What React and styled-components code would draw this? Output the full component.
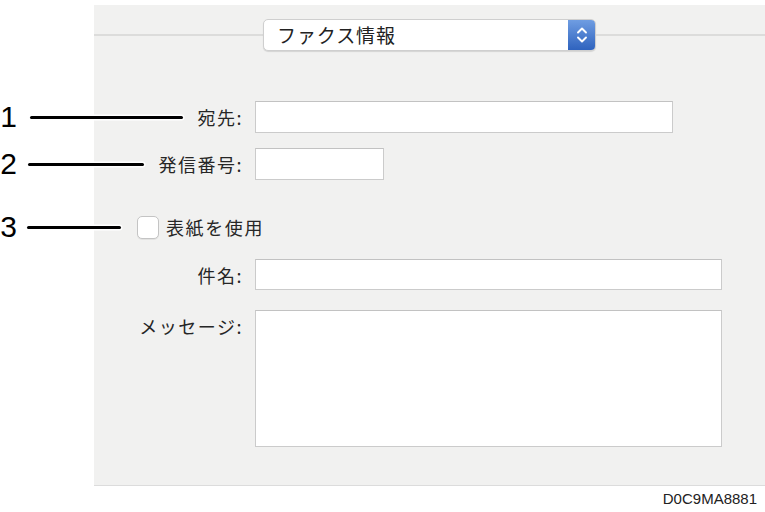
import React from "react";
import styled, { createGlobalStyle } from "styled-components";

const Global = createGlobalStyle`
  html, body { margin: 0; padding: 0; background: #ffffff; }
  body { font-family: "Noto Sans CJK JP", "Noto Sans", sans-serif; }
  * { box-sizing: border-box; }
`;

const Page = styled.div`
  position: relative;
  width: 765px;
  height: 512px;
  overflow: hidden;
  background: #fff;
  display: flex;
  flex-direction: column;
  padding-top: 5px;
`;

const Panel = styled.div`
  margin-left: 94px;
  height: 481px;
  background: #f1f1f0;
  border-bottom: 1px solid #dcdcdc;
  display: flex;
  flex-direction: column;
  padding-top: 14px;
`;

const Header = styled.div`
  display: flex;
  align-items: center;
  height: 32px;
`;

const Rule = styled.div`
  flex: 1;
  height: 2px;
  background: #dcdcdb;
`;

const Popup = styled.div`
  width: 333px;
  height: 32px;
  display: flex;
  background: #fff;
  border: 1px solid #cfcfcf;
  border-radius: 5px;
  box-shadow: 0 1px 1px rgba(0, 0, 0, 0.12);
  overflow: hidden;
`;

const PopupText = styled.div`
  flex: 1;
  padding-left: 13px;
  font-size: 19px;
  letter-spacing: 0.9px;
  line-height: 30px;
  color: #222;
`;

const Stepper = styled.div`
  width: 27px;
  display: flex;
  align-items: center;
  justify-content: center;
  background: linear-gradient(#6f9de2, #2f63be);
`;

const Form = styled.div`
  margin-top: 50px;
  display: flex;
  flex-direction: column;
`;

const Row = styled.div`
  display: flex;
  align-items: ${(p) => (p.$top ? "flex-start" : "center")};
  margin-top: ${(p) => p.$gap || 0}px;
  height: ${(p) => p.$h}px;
`;

const Label = styled.div`
  width: 149px;
  margin-right: 12px;
  text-align: right;
  font-size: 18px;
  letter-spacing: 1.5px;
  line-height: 32px;
  color: #262626;
  white-space: nowrap;
`;

const Field = styled.div`
  width: ${(p) => p.$w}px;
  height: ${(p) => p.$h}px;
  background: #fff;
  border: 1px solid #cbcbcb;
  border-top-color: #c2c2c2;
`;

const CheckRow = styled.label`
  display: flex;
  align-items: center;
  margin-left: 43px;
  gap: 7px;
  font-size: 18px;
  letter-spacing: 1.6px;
  color: #262626;
`;

const Box = styled.span`
  width: 22px;
  height: 23px;
  background: #fff;
  border: 1px solid #c4c4c4;
  border-radius: 5px;
  box-shadow: 0 1px 0 rgba(0, 0, 0, 0.06);
`;

const Footer = styled.div`
  text-align: right;
  padding-right: 8px;
  margin-top: 4px;
  font-family: "Liberation Sans", Arial, sans-serif;
  font-size: 15px;
  color: #222;
`;

const Callout = styled.div`
  position: absolute;
  left: 0;
  top: ${(p) => p.$y}px;
  display: flex;
  align-items: center;
  height: 30px;
  transform: translateY(-50%);
`;

const Num = styled.span`
  width: ${(p) => p.$nw}px;
  font-family: "Liberation Sans", Arial, sans-serif;
  font-size: 30px;
  color: #000;
  line-height: 30px;
  text-align: right;
`;

const Leader = styled.span`
  margin-left: ${(p) => p.$ml}px;
  width: ${(p) => p.$w}px;
  height: 3px;
  background: #000;
  border-radius: 2px;
  box-shadow: 0 0 0 1.5px #fff;
`;

function Chevrons() {
  return (
    <svg width="14" height="22" viewBox="0 0 14 22">
      <path d="M3 8.5 L7 4.5 L11 8.5" fill="none" stroke="#fff" strokeWidth="1.9" strokeLinecap="round" strokeLinejoin="round" />
      <path d="M3 13.5 L7 17.5 L11 13.5" fill="none" stroke="#fff" strokeWidth="1.9" strokeLinecap="round" strokeLinejoin="round" />
    </svg>
  );
}

export default function App() {
  return (
    <>
      <Global />
      <Page>
        <Panel>
          <Header>
            <Rule />
            <Popup>
              <PopupText>ファクス情報</PopupText>
              <Stepper>
                <Chevrons />
              </Stepper>
            </Popup>
            <Rule />
          </Header>
          <Form>
            <Row $h={32}>
              <Label>宛先:</Label>
              <Field $w={418} $h={32} />
            </Row>
            <Row $h={32} $gap={15}>
              <Label>発信番号:</Label>
              <Field $w={129} $h={32} />
            </Row>
            <Row $h={32} $gap={31}>
              <CheckRow>
                <Box />
                表紙を使用
              </CheckRow>
            </Row>
            <Row $h={31} $gap={16}>
              <Label>件名:</Label>
              <Field $w={467} $h={31} />
            </Row>
            <Row $h={137} $gap={20} $top>
              <Label>メッセージ:</Label>
              <Field $w={467} $h={137} />
            </Row>
          </Form>
        </Panel>
        <Footer>D0C9MA8881</Footer>
        <Callout $y={117}>
          <Num $nw={17}>1</Num>
          <Leader $ml={13} $w={153} />
        </Callout>
        <Callout $y={164}>
          <Num $nw={17}>2</Num>
          <Leader $ml={11} $w={116} />
        </Callout>
        <Callout $y={227}>
          <Num $nw={17}>3</Num>
          <Leader $ml={10} $w={94} />
        </Callout>
      </Page>
    </>
  );
}
